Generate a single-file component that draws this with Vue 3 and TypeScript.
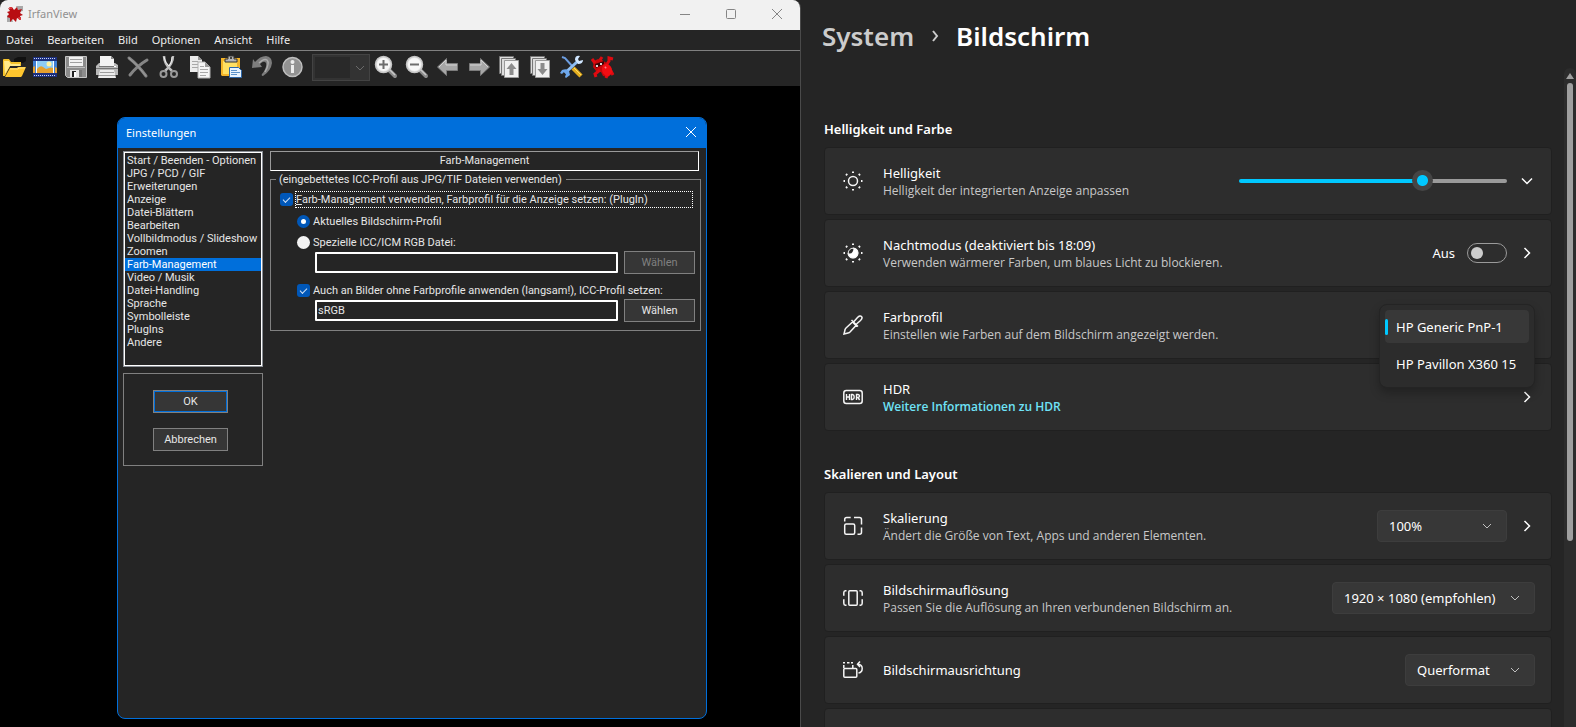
<script setup lang="ts">
import { ref } from 'vue'

const menus: string[] = ['Datei', 'Bearbeiten', 'Bild', 'Optionen', 'Ansicht', 'Hilfe']

const pages: string[] = [
  'Start / Beenden - Optionen',
  'JPG / PCD / GIF',
  'Erweiterungen',
  'Anzeige',
  'Datei-Blättern',
  'Bearbeiten',
  'Vollbildmodus / Slideshow',
  'Zoomen',
  'Farb-Management',
  'Video / Musik',
  'Datei-Handling',
  'Sprache',
  'Symbolleiste',
  'PlugIns',
  'Andere',
]
const activePage = ref<string>('Farb-Management')

const useColorManagement = ref<boolean>(true)
const profileSource = ref<'current' | 'file'>('current')
const profileFile = ref<string>('')
const applyToAll = ref<boolean>(true)
const defaultProfile = ref<string>('sRGB')

const brightness = ref<number>(70)
const nightLight = ref<boolean>(false)
const profiles: string[] = ['HP Generic PnP-1', 'HP Pavillon X360 15']
const activeProfile = ref<string>('HP Generic PnP-1')
</script>

<template>
  <div class="desktop">
    <section class="viewer">
      <header class="titlebar">
        <svg class="app-icon" viewBox="0 0 16 16" aria-hidden="true">
          <path d="M9 0h7v5l-4 1zM0 9l4 1 2 6H0z" fill="#a9a9a9" />
          <path d="M1 2l3 1 1-2 2 3 3-3 1 3 4-1-2 4 3 2-3 1 1 4-4-2-1 4-3-3-3 3v-4l-3-1 2-3-2-2 3-1z" fill="#b80d12" />
          <path d="M2 1h3v2H3zM11 11h3v3h-2z" fill="#d8353a" />
        </svg>
        <h1 class="app-name">IrfanView</h1>
        <div class="caption-buttons">
          <button type="button" aria-label="Minimieren"><svg viewBox="0 0 10 10"><path d="M0 5.500h10" /></svg></button>
          <button type="button" aria-label="Maximieren"><svg viewBox="0 0 10 10"><rect x=".5" y=".5" width="9" height="9" rx="1" /></svg></button>
          <button type="button" aria-label="Schließen"><svg viewBox="0 0 10 10"><path d="M0 0l10 10M10 0L0 10" /></svg></button>
        </div>
      </header>

      <nav class="menubar">
        <button v-for="m in menus" :key="m" type="button">{{ m }}</button>
      </nav>

      <div class="toolbar">
        <div class="tool-group">
          <button type="button" aria-label="Öffnen">
            <svg viewBox="0 0 24 24">
              <path d="M12 4l4-2h8v4l-3 2h-9z" fill="#111" />
              <path d="M1 21V5q0-1 1-1h5l2 3h10v4H8L3 21z" fill="#f5c22c" />
              <path d="M2 6h5l2 3h9v2H8l-5 8z" fill="#ffe98a" />
              <path d="M3 22l5-9h7l1-1h8l-4 9-1 1z" fill="#ffc62e" />
              <path d="M8 14h8l1-1h6" stroke="#ffe68a" fill="none" />
            </svg>
          </button>
          <button type="button" aria-label="Diashow">
            <svg viewBox="0 0 24 24">
              <path d="M0 2h24v4H0zM0 18h24v4H0z" fill="#1c2f7c" />
              <path d="M1 3.500h22M1 20.500h22" stroke="#c9d5f5" stroke-dasharray="1 1" />
              <path d="M0 6h24v12H0z" fill="#3f7fd2" />
              <path d="M4 6h16v12H4z" fill="#8dccf6" />
              <circle cx="16" cy="9" r="2.500" fill="#fff3a0" />
              <path d="M0 12l2-1v7H0zM4 14q3-4 6-2l3 2 3-1q2-1 4 0v5H4zM22 12l2 1v5h-2z" fill="#e5a02e" />
              <path d="M3.500 6v12M20.500 6v12" stroke="#fff" />
            </svg>
          </button>
          <button type="button" aria-label="Speichern">
            <svg viewBox="0 0 24 24">
              <path d="M1.500 1.500h21v21h-19l-2-2z" fill="#8c8c8c" stroke="#c5c5c5" />
              <path d="M5 2h14v9H5z" fill="#f2f2f2" />
              <path d="M6 4.500h12M6 7.500h12" stroke="#a0a0a0" />
              <path d="M3 12h18v1H3z" fill="#bdbdbd" />
              <path d="M6 15h12v7H6z" fill="#e4e4e4" />
              <path d="M8 16h4v6H8z" fill="#222" /><path d="M10 17h2v5h-2z" fill="#fff" />
              <path d="M15 15h3v7h-3z" fill="#777" />
            </svg>
          </button>
          <button type="button" aria-label="Drucken">
            <svg viewBox="0 0 24 24">
              <path d="M5 1h11l3 3v8H5z" fill="#f3f3f3" /><path d="M16 1v3h3z" fill="#8c8c8c" />
              <path d="M2 10l2-2h1v4h14V8h1l3 2v10H1V11z" fill="#b9b9b9" />
              <path d="M1 13.500h22M4 11.500h16" stroke="#777" />
              <path d="M5 15h14l2 8H3z" fill="#ededed" /><path d="M5 17.500h14M4 20.500h16" stroke="#9d9d9d" />
              <path d="M19 11h2v1h-2z" fill="#fff" />
            </svg>
          </button>
          <button type="button" aria-label="Löschen">
            <svg viewBox="0 0 24 24">
              <path d="M3 3q9 7 17 18M21 5Q11 11 4 20" fill="none" stroke="#858585" stroke-width="3" stroke-linecap="round" />
              <path d="M3 3q9 7 17 18" fill="none" stroke="#9c9c9c" />
            </svg>
          </button>
          <button type="button" aria-label="Ausschneiden">
            <svg viewBox="0 0 24 24">
              <path d="M7 1q0 8 8 15M16 1q0 8-8 15" fill="none" stroke="#bcbcbc" stroke-width="2.500" />
              <path d="M7 2q1 6 5 9M15 2q0 6-3 9" fill="none" stroke="#eee" />
              <circle cx="6.500" cy="19" r="3" fill="none" stroke="#999" stroke-width="2" />
              <circle cx="17" cy="19" r="3" fill="none" stroke="#999" stroke-width="2" />
            </svg>
          </button>
          <button type="button" aria-label="Kopieren">
            <svg viewBox="0 0 24 24">
              <path d="M2 1h8l4 4v12H2z" fill="#ececec" /><path d="M10 1v4h4z" fill="#999" />
              <path d="M4 6.500h6M4 9.500h6M4 12.500h6" stroke="#a8a8a8" />
              <path d="M10 7h7l5 5v11H10z" fill="#f4f4f4" stroke="#b1b1b1" /><path d="M17 7v5h5z" fill="#999" />
              <path d="M12 11.500h4M12 14.500h8M12 17.500h8M12 20.500h6" stroke="#a8a8a8" />
            </svg>
          </button>
          <button type="button" aria-label="Einfügen">
            <svg viewBox="0 0 24 24">
              <path d="M2 3h19v18H3l-1-1z" fill="#f3b429" /><path d="M4 6h14v13H4z" fill="#ffdf62" />
              <path d="M9 1h6v3h3v3H6V4h3z" fill="#b6b6b6" stroke="#333" /><path d="M11 2h2v2h-2z" fill="#444" />
              <path d="M10.500 12.500h9l3 3v7h-12z" fill="#e8f4ff" stroke="#2c66a8" />
              <path d="M12 15.500h6M12 17.500h9M12 19.500h6" stroke="#5c93cb" />
            </svg>
          </button>
          <button type="button" aria-label="Rückgängig">
            <svg viewBox="0 0 24 24">
              <path d="M3 4l2 3q5-6 11-6 6 1 6 7-1 8-9 13-2 0-1-2 5-6 4-11-2-3-6 1l2 3-10 1z" fill="#7d7d7d" />
              <path d="M9 8q5-5 8-3 3 3-2 12" fill="none" stroke="#ababab" stroke-width="1.500" />
            </svg>
          </button>
          <button type="button" aria-label="Information">
            <svg viewBox="0 0 24 24">
              <circle cx="11.500" cy="12" r="9.500" fill="#929292" stroke="#bebebe" stroke-width="1.500" />
              <path d="M10 10h3v8h-3z" fill="#ececec" /><circle cx="11.500" cy="7" r="2" fill="#ececec" />
            </svg>
          </button>
        </div>
        <div class="zoom-combo">
          <select aria-label="Zoomstufe" disabled><option></option></select>
          <svg viewBox="0 0 10 10" aria-hidden="true"><path d="M1 3l4 4 4-4" /></svg>
        </div>
        <div class="tool-group">
          <button v-for="z in ['Vergrößern', 'Verkleinern']" :key="z" type="button" :aria-label="z">
            <svg viewBox="0 0 24 24">
              <path d="M15 15l6 6" stroke="#8b8b8b" stroke-width="4" stroke-linecap="round" />
              <path d="M16 15l5 5" stroke="#c8c8c8" stroke-width="1.500" />
              <circle cx="9.500" cy="9.500" r="8" fill="#e3e3e3" stroke="#c6c6c6" stroke-width="1.500" />
              <circle cx="9.500" cy="9.500" r="6.500" fill="#f7f7f7" />
              <path :d="z === 'Vergrößern' ? 'M5 9.500h9M9.500 5v9' : 'M5 9.500h9'" stroke="#6d6d6d" stroke-width="2" />
            </svg>
          </button>
          <button type="button" aria-label="Zurück">
            <svg viewBox="0 0 24 24"><path d="M1.500 12l9-8.500v5h11v7h-11v5z" fill="#a7a7a7" stroke="#7c7c7c" /><path d="M3 12l7-7v5h11" fill="none" stroke="#d3d3d3" /></svg>
          </button>
          <button type="button" aria-label="Weiter">
            <svg viewBox="0 0 24 24"><path d="M22.500 12l-9-8.500v5h-11v7h11v5z" fill="#a7a7a7" stroke="#7c7c7c" /><path d="M3 10h11V5l7 7" fill="none" stroke="#d3d3d3" /></svg>
          </button>
          <button v-for="p in ['Vorherige Seite', 'Nächste Seite']" :key="p" type="button" :aria-label="p">
            <svg viewBox="0 0 24 24">
              <path d="M1.500 1.500h14v17h-14z" fill="#ddd" stroke="#777" />
              <path d="M3.500 3.500h14v17h-14z" fill="#ddd" stroke="#777" />
              <path d="M6.500 5.500h14v17h-14z" fill="#f1f1f1" stroke="#9b9b9b" />
              <path :d="p === 'Vorherige Seite' ? 'M13.500 8l5 6h-3v6h-4v-6h-3z' : 'M13.500 20l5-6h-3V8h-4v6h-3z'" fill="#8c8c8c" />
            </svg>
          </button>
          <button type="button" aria-label="Einstellungen">
            <svg viewBox="0 0 24 24">
              <path d="M2 2l3 1 8 9" fill="none" stroke="#6c9de0" stroke-width="2" />
              <path d="M13 13l8 8" stroke="#e4ad1e" stroke-width="4.500" /><path d="M14 13l7 7" stroke="#ffdb63" />
              <path d="M5 18L18 6" stroke="#8dbdf2" stroke-width="3" />
              <path d="M20 1q-5-1-5 4l3 4q5 0 5-4l-4 1-1-2z" fill="#cfe6ff" />
              <path d="M2 15q5-2 7 1l1 4-4 3-1-1 1-3-2-2-2 2-2-1z" fill="#6ea8ec" />
            </svg>
          </button>
          <button type="button" aria-label="IrfanView-Homepage">
            <svg viewBox="0 0 24 24">
              <path d="M3 6l4-2 4 1 3 2 3 2 3 5v5l-3 3-5-1-2-4-5-1-3-4z" fill="#c9060a" />
              <path d="M4 8L1 4M9 5l2-3M16 9l2-3V3l4 1M9 15l-5 4 1 3M16 20l-1 3M20 16l2 4" fill="none" stroke="#e00a10" stroke-width="3" />
              <ellipse cx="16" cy="15" rx="5" ry="6" fill="#f20d13" transform="rotate(-20 16 15)" />
              <path d="M14 13l1-1" stroke="#ff8084" stroke-width="2" />
              <path d="M4 9l9-3v3l-8 4z" fill="#3a0506" />
              <path d="M5 10h2v2H5zM9 8h2v2H9z" fill="#d8d8d8" />
            </svg>
          </button>
        </div>
      </div>

      <div class="canvas">
        <form class="dialog" @submit.prevent>
          <header class="dialog-title">
            <h2>Einstellungen</h2>
            <button type="button" aria-label="Schließen"><svg viewBox="0 0 10 10"><path d="M0 0l10 10M10 0L0 10" /></svg></button>
          </header>
          <div class="dialog-body">
            <div class="side">
              <ul class="page-list" role="listbox" aria-label="Seiten">
                <li
                  v-for="p in pages"
                  :key="p"
                  role="option"
                  :aria-selected="p === activePage"
                  :class="{ active: p === activePage }"
                  @click="activePage = p"
                >{{ p }}</li>
              </ul>
              <div class="actions">
                <button class="push default" type="submit">OK</button>
                <button class="push" type="button">Abbrechen</button>
              </div>
            </div>
            <div class="page">
              <h3>Farb-Management</h3>
              <fieldset>
                <legend>(eingebettetes ICC-Profil aus JPG/TIF Dateien verwenden)</legend>
                <label class="choice main">
                  <input v-model="useColorManagement" class="box" type="checkbox" />
                  <span class="focus"><u>F</u>arb-Management verwenden, Farbprofil für die Anzeige setzen: (PlugIn)</span>
                </label>
                <div class="nested">
                  <label class="choice"><input v-model="profileSource" class="dot" type="radio" value="current" /><span>Aktuelles Bildschirm-Profil</span></label>
                  <label class="choice"><input v-model="profileSource" class="dot" type="radio" value="file" /><span>Spezielle ICC/ICM RGB Datei:</span></label>
                  <div class="file-row">
                    <input v-model="profileFile" type="text" aria-label="Spezielle ICC/ICM RGB Datei" />
                    <button class="push" type="button" disabled>Wählen</button>
                  </div>
                  <label class="choice"><input v-model="applyToAll" class="box" type="checkbox" /><span>Auch an Bilder ohne Farbprofile anwenden (langsam!), ICC-Profil setzen:</span></label>
                  <div class="file-row second">
                    <input v-model="defaultProfile" type="text" aria-label="ICC-Profil" />
                    <button class="push" type="button">Wählen</button>
                  </div>
                </div>
              </fieldset>
            </div>
          </div>
        </form>
      </div>
    </section>

    <main class="settings">
      <div class="settings-content">
        <nav class="crumbs">
          <a href="#system">System</a>
          <svg viewBox="0 0 10 12" aria-hidden="true"><path d="M3 1l4 5-4 5" /></svg>
          <h1>Bildschirm</h1>
        </nav>

        <section class="group">
          <h2>Helligkeit und Farbe</h2>
          <div class="card">
            <svg class="icon" viewBox="0 0 20 20" aria-hidden="true">
              <circle cx="10" cy="10" r="4.500" />
              <path d="M10 .5v1.500M10 18v1.500M.5 10H2M18 10h1.500M3 3l1.200 1.200M15.800 15.800L17 17M3 17l1.200-1.200M15.800 4.200L17 3" stroke-width="2" />
            </svg>
            <div class="text"><h3>Helligkeit</h3><p>Helligkeit der integrierten Anzeige anpassen</p></div>
            <input v-model.number="brightness" class="slider" type="range" min="0" max="100" aria-label="Helligkeit" :style="{ '--fill': brightness + '%' }" />
            <button class="more" type="button" aria-label="Erweitern"><svg viewBox="0 0 16 16"><path d="M3 5.500l5 5 5-5" /></svg></button>
          </div>
          <div class="card">
            <svg class="icon" viewBox="0 0 20 20" aria-hidden="true">
              <path d="M10 4.500a5.500 5.500 0 1 1-5.500 5.500q3.500 1.500 5-1T10 4.500z" fill="#fff" stroke="none" />
              <circle cx="10" cy="10" r="4.800" stroke-width="1" />
              <path d="M10 .5v1.500M10 18v1.500M.5 10H2M18 10h1.500M3 3l1.200 1.200M15.800 15.800L17 17M3 17l1.200-1.200M15.800 4.200L17 3" stroke-width="2" />
            </svg>
            <div class="text"><h3>Nachtmodus (deaktiviert bis 18:09)</h3><p>Verwenden wärmerer Farben, um blaues Licht zu blockieren.</p></div>
            <label class="switch"><span>Aus</span><input v-model="nightLight" type="checkbox" role="switch" aria-label="Nachtmodus" /></label>
            <button class="more" type="button" aria-label="Nachtmodus öffnen"><svg viewBox="0 0 16 16"><path d="M5.500 3l5 5-5 5" /></svg></button>
          </div>
          <div class="card">
            <svg class="icon" viewBox="0 0 20 20" aria-hidden="true">
              <path d="M1 19l1-4q0-1 1-2l6.500-6 3.500 3.500L7 17q-1 1-2 1zM8.500 5l6.500 6.500M11 6.500l3.500-4Q17 0 18.500 1.500q1.500 1.700-1 4L13.500 9" />
            </svg>
            <div class="text"><h3>Farbprofil</h3><p>Einstellen wie Farben auf dem Bildschirm angezeigt werden.</p></div>
            <ul class="popup" role="listbox" aria-label="Farbprofil">
              <li
                v-for="p in profiles"
                :key="p"
                role="option"
                :aria-selected="p === activeProfile"
                :class="{ active: p === activeProfile }"
                @click="activeProfile = p"
              >{{ p }}</li>
            </ul>
          </div>
          <div class="card">
            <svg class="icon" viewBox="0 0 20 20" aria-hidden="true">
              <rect x=".8" y="3.500" width="18.400" height="13" rx="2.500" />
              <path d="M3.500 7v6M6.500 7v6M3.500 10h3M8.500 7.500v5h1q1.700-.3 1.700-2.500T9.500 7.500zM13.500 13V7.500h1.500q1.500.2 1.500 1.500T15 10.500h-1.500M15 10.500l1.600 2.500" stroke-width="1.400" />
            </svg>
            <div class="text"><h3>HDR</h3><a href="#hdr">Weitere Informationen zu HDR</a></div>
            <button class="more" type="button" aria-label="HDR öffnen"><svg viewBox="0 0 16 16"><path d="M5.500 3l5 5-5 5" /></svg></button>
          </div>
        </section>

        <section class="group">
          <h2>Skalieren und Layout</h2>
          <div class="card">
            <svg class="icon" viewBox="0 0 20 20" aria-hidden="true">
              <rect x="1.700" y="8" width="10" height="10.300" rx="1.500" />
              <path d="M1.700 5.500V3.500q0-2 2-2h4M11 1.500h5.500q2 0 2 2v5M18.500 11.500v4.800q0 2-2 2h-2" />
            </svg>
            <div class="text"><h3>Skalierung</h3><p>Ändert die Größe von Text, Apps und anderen Elementen.</p></div>
            <div class="drop">
              <select aria-label="Skalierung"><option>100%</option></select>
              <svg viewBox="0 0 10 10" aria-hidden="true"><path d="M1 3l4 4 4-4" /></svg>
            </div>
            <button class="more" type="button" aria-label="Skalierung öffnen"><svg viewBox="0 0 16 16"><path d="M5.500 3l5 5-5 5" /></svg></button>
          </div>
          <div class="card">
            <svg class="icon" viewBox="0 0 20 20" aria-hidden="true">
              <rect x="5.800" y="2.800" width="8.400" height="14.400" rx="1" />
              <path d="M3.500 2.800h-1q-1.700.2-1.700 2v3M3.500 17.200h-1q-1.700-.2-1.700-2v-4M16.500 2.800h1q1.700.2 1.700 2v3M16.500 17.200h1q1.700-.2 1.700-2v-4" />
            </svg>
            <div class="text"><h3>Bildschirmauflösung</h3><p>Passen Sie die Auflösung an Ihren verbundenen Bildschirm an.</p></div>
            <div class="drop wide">
              <select aria-label="Bildschirmauflösung"><option>1920 × 1080 (empfohlen)</option></select>
              <svg viewBox="0 0 10 10" aria-hidden="true"><path d="M1 3l4 4 4-4" /></svg>
            </div>
          </div>
          <div class="card">
            <svg class="icon" viewBox="0 0 20 20" aria-hidden="true">
              <rect x=".8" y="8.500" width="13" height="8.700" rx="1" />
              <path d="M.8 8V5M0 2.800h2M4 2.800h2.500M8 2.800h2M9.800 5v3" />
              <path d="M17 1.500l-2.500 2.800 2.500 2.700M15 4.300q4.200.3 4.200 4.200t-3.700 4.500" />
            </svg>
            <div class="text"><h3>Bildschirmausrichtung</h3></div>
            <div class="drop">
              <select aria-label="Bildschirmausrichtung"><option>Querformat</option></select>
              <svg viewBox="0 0 10 10" aria-hidden="true"><path d="M1 3l4 4 4-4" /></svg>
            </div>
          </div>
          <div class="card"></div>
        </section>
      </div>
      <div class="scrollbar" aria-hidden="true"><i class="up"></i><i class="thumb"></i></div>
    </main>
  </div>
</template>

<style>
body {
  background: #252525;
}
</style>

<style scoped>
* {
  box-sizing: border-box;
}
h1,
h2,
h3,
p,
ul {
  margin: 0;
  padding: 0;
  font-size: inherit;
  font-weight: 400;
  list-style: none;
}
button,
input,
select {
  margin: 0;
  padding: 0;
  border: 0;
  color: inherit;
  font: inherit;
  background: none;
}
svg {
  display: block;
  flex: none;
}
.desktop {
  display: grid;
  grid-template-columns: 801fr 775fr;
  height: 100vh;
  overflow: hidden;
  background: #252525;
  font-family: 'Noto Sans', 'Open Sans', sans-serif;
  color: #fff;
}

/* Image viewer window */
.viewer {
  display: flex;
  flex-direction: column;
  min-width: 0;
  border-right: 1px solid #4a4a4a;
  border-radius: 8px 8px 0 0;
  overflow: hidden;
  background: #000;
}
.titlebar {
  display: flex;
  align-items: center;
  gap: 5px;
  flex: none;
  height: 30px;
  padding: 0 0 2px 7px;
  background: #f1f1f1;
  color: #909090;
}
.app-icon {
  width: 16px;
  height: 16px;
}
.app-name {
  flex: 1;
  font-size: 11px;
  line-height: 16px;
}
.caption-buttons {
  display: flex;
  height: 100%;
}
.caption-buttons button {
  display: grid;
  place-items: center;
  width: 46px;
}
.caption-buttons svg {
  width: 10px;
  height: 10px;
  fill: none;
  stroke: #858585;
}
.menubar {
  display: flex;
  gap: 14px;
  flex: none;
  height: 21px;
  padding: 0 0 2px 6px;
  border-bottom: 1px solid #808080;
  background: #252525;
  color: #ececec;
  font-size: 11px;
}
.toolbar {
  display: flex;
  flex: none;
  height: 35px;
  padding: 4px 0 0 2px;
  background: #252525;
}
.tool-group {
  display: flex;
  gap: 7px;
}
.tool-group button,
.tool-group svg {
  width: 24px;
  height: 24px;
}
.zoom-combo {
  display: grid;
  align-items: center;
  width: 58px;
  height: 27px;
  margin: -1px 4px 0 7px;
  padding: 2px;
  border: 1px solid #434343;
  background: #333;
}
.zoom-combo select,
.zoom-combo svg {
  grid-area: 1 / 1;
}
.zoom-combo select {
  width: 35px;
  height: 21px;
  appearance: none;
  background: #252525;
}
.zoom-combo svg {
  justify-self: end;
  width: 10px;
  height: 10px;
  margin-right: 2px;
  fill: none;
  stroke: #6a6a6a;
}
.canvas {
  display: flex;
  flex: 1;
  min-height: 0;
  padding: 31px 93px 8px 117px;
}

/* Preferences dialog */
.dialog {
  display: flex;
  flex: 1;
  flex-direction: column;
  min-width: 0;
  border: 1px solid #006fdb;
  border-radius: 8px;
  overflow: hidden;
  background: #252525;
  font-family: Roboto, 'Liberation Sans', sans-serif;
  font-size: 11px;
  line-height: 13px;
  color: #e6e6e6;
}
.dialog-title {
  display: flex;
  align-items: center;
  justify-content: space-between;
  flex: none;
  height: 30px;
  padding: 0 10px 2px 8px;
  background: #006fdb;
  color: #fff;
  font-family: 'Noto Sans', 'Open Sans', sans-serif;
}
.dialog-title svg {
  width: 10px;
  height: 10px;
  overflow: visible;
  fill: none;
  stroke: #fff;
}
.dialog-body {
  display: flex;
  gap: 7px;
  padding: 3px 5px 0;
}
.side {
  display: flex;
  flex: none;
  flex-direction: column;
  gap: 6px;
  width: 140px;
}
.page-list {
  height: 216px;
  padding: 2px 1px 1px;
  border: 1px solid #8a8f96;
  outline: 1px solid #fff;
  outline-offset: -2px;
}
.page-list li {
  padding-left: 2px;
  white-space: nowrap;
}
.page-list .active {
  background: #006fdb;
  color: #fff;
}
.actions {
  display: flex;
  flex-direction: column;
  gap: 15px;
  height: 93px;
  padding: 16px 34px 0 29px;
  border: 1px solid #808080;
}
.push {
  height: 23px;
  border: 1px solid #808080;
  background: #363636;
}
.push.default {
  box-shadow: inset 0 0 0 1px #006fdb;
}
.push:disabled {
  color: #808080;
}
.page {
  flex: 1;
  min-width: 0;
}
.page h3 {
  height: 20px;
  margin-right: 2px;
  border: 1px solid #fff;
  border-color: #9a9a9a #fff #fff #9a9a9a;
  line-height: 18px;
  text-align: center;
}
fieldset {
  min-width: 0;
  margin: 2px 0 0;
  padding: 5px 5px 8px 9px;
  border: 1px solid #808080;
}
legend {
  margin-left: -4px;
  padding: 0 4px 0 3px;
}
.choice {
  display: flex;
  align-items: center;
  gap: 3px;
  height: 21px;
}
.choice.main {
  gap: 2px;
  height: 17px;
  margin: 0 2px 3px 0;
}
.choice input {
  display: grid;
  flex: none;
  place-items: center;
  width: 13px;
  height: 13px;
  appearance: none;
}
.box {
  border-radius: 3px;
  background: #f3f3f3;
}
.box:checked {
  background: #0057b8;
}
.box:checked::before {
  content: '';
  width: 6px;
  height: 3px;
  margin-top: -2px;
  border: solid #cfe0f5;
  border-width: 0 0 1px 1px;
  transform: rotate(-45deg);
}
.dot {
  border-radius: 50%;
  background: #f3f3f3;
}
.dot:checked {
  border: 4px solid #0057b8;
  background: #fff;
}
.focus {
  flex: 1;
  height: 17px;
  border: 1px dotted #fff;
  line-height: 15px;
}
.nested {
  margin-left: 17px;
}
.file-row {
  display: flex;
  align-items: center;
  gap: 6px;
  height: 23px;
  margin: -2px 0 6px 18px;
}
.file-row.second {
  margin-bottom: 0;
}
.file-row input {
  flex: 1;
  min-width: 0;
  height: 21px;
  padding: 0 1px;
  border: 2px solid #fff;
  border-radius: 1px;
}
.file-row .push {
  width: 71px;
}

/* System settings */
.settings {
  display: flex;
  min-width: 0;
  height: 100vh;
  overflow: hidden;
  font-size: 13px;
}
.settings-content {
  flex: 1;
  min-width: 0;
  padding: 18px 12px 0 23px;
}
.crumbs {
  display: flex;
  align-items: center;
  gap: 16px;
  height: 38px;
  margin-left: -2px;
  padding-bottom: 2px;
  font-size: 26px;
  font-weight: 600;
  line-height: 36px;
}
.crumbs a {
  color: #ccc;
  text-decoration: none;
}
.crumbs h1 {
  font-weight: 600;
}
.crumbs svg {
  width: 10px;
  height: 12px;
  fill: none;
  stroke: #ccc;
  stroke-width: 2;
}
.group {
  display: flex;
  flex-direction: column;
  gap: 4px;
}
.group h2 {
  height: 20px;
  margin: 33px 0 4px;
  font-weight: 600;
  line-height: 20px;
}
.crumbs + .group h2 {
  margin-top: 63px;
}
.card {
  position: relative;
  display: flex;
  align-items: center;
  flex: none;
  height: 68px;
  padding: 0 16px 0 18px;
  border: 1px solid #202020;
  border-radius: 4px;
  background: #2d2d2d;
}
.icon {
  width: 20px;
  height: 20px;
  fill: none;
  stroke: #f5f5f5;
  stroke-width: 1.5;
}
.text {
  flex: 1;
  min-width: 0;
  margin-left: 20px;
  white-space: nowrap;
}
.text h3 {
  line-height: 20px;
}
.text p,
.text a {
  display: block;
  color: #c8c8c8;
  font-family: 'Open Sans', 'Noto Sans', sans-serif;
  font-size: 12px;
  line-height: 16px;
}
.text a {
  color: #6fe3f7;
  font-weight: 600;
  text-decoration: none;
}
.more {
  margin-left: 12px;
}
.more svg {
  width: 16px;
  height: 16px;
  fill: none;
  stroke: #fff;
  stroke-width: 1.5;
}
.slider {
  width: 268px;
  height: 21px;
  appearance: none;
}
.slider::-webkit-slider-runnable-track {
  height: 4px;
  border-radius: 2px;
  background: linear-gradient(to right, #00c8ff var(--fill), #9a9a9a var(--fill));
}
.slider::-webkit-slider-thumb {
  width: 21px;
  height: 21px;
  margin-top: -9px;
  border: 0;
  border-radius: 50%;
  appearance: none;
  background: radial-gradient(circle, #00c8ff 5px, #454545 6px);
}
.switch {
  display: flex;
  align-items: center;
  gap: 12px;
}
.switch input {
  width: 40px;
  height: 20px;
  padding: 3px;
  border: 1px solid #9a9a9a;
  border-radius: 10px;
  appearance: none;
}
.switch input::before {
  content: '';
  display: block;
  width: 12px;
  height: 12px;
  border-radius: 50%;
  background: #ccc;
}
.switch input:checked::before {
  margin-left: 20px;
}
.drop {
  display: grid;
  align-items: center;
  width: 130px;
}
.drop.wide {
  width: 203px;
}
.drop select,
.drop svg {
  grid-area: 1 / 1;
}
.drop select {
  width: 100%;
  height: 32px;
  padding: 0 11px;
  border: 1px solid #3d3d3d;
  border-radius: 4px;
  appearance: none;
  background: #373737;
}
.drop svg {
  justify-self: end;
  width: 10px;
  height: 10px;
  margin-right: 15px;
  fill: none;
  stroke: #c0c0c0;
  pointer-events: none;
}
.popup {
  position: absolute;
  z-index: 1;
  top: 12px;
  right: 16px;
  width: 156px;
  padding: 5px 5px 3px;
  border: 1px solid #242424;
  border-radius: 8px;
  background: #2c2c2c;
  box-shadow: 0 5px 10px rgba(0, 0, 0, 0.25);
}
.popup li {
  display: flex;
  align-items: center;
  height: 33px;
  margin-bottom: 4px;
  padding-left: 11px;
  border-radius: 4px;
  white-space: nowrap;
}
.popup .active {
  background: #383838;
}
.popup .active::before {
  content: '';
  width: 3px;
  height: 16px;
  margin: 0 8px 0 -11px;
  border-radius: 2px;
  background: #00c8ff;
}
.scrollbar {
  display: flex;
  flex: none;
  flex-direction: column;
  align-items: center;
  gap: 4px;
  width: 12px;
  margin-top: 68px;
  padding-top: 5px;
  border-radius: 6px 6px 0 0;
  background: #2c2c2c;
}
.up {
  border: solid transparent;
  border-width: 0 4px 6px;
  border-bottom-color: #9f9f9f;
}
.thumb {
  width: 6px;
  height: 70%;
  border-radius: 3px;
  background: #9f9f9f;
}
</style>
